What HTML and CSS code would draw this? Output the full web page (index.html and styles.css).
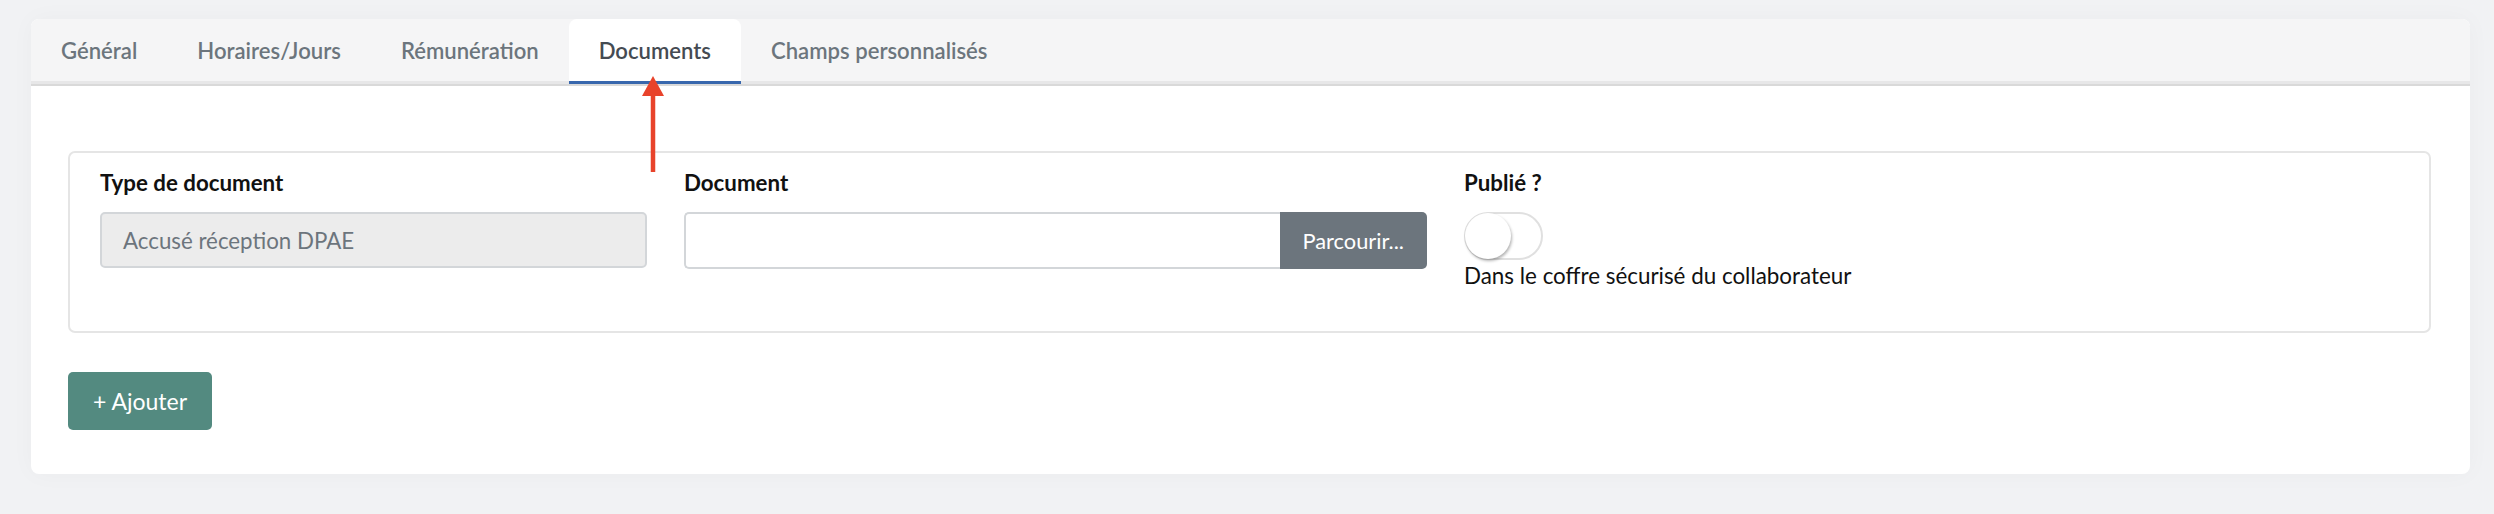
FILE: index.html
```html
<!DOCTYPE html>
<html lang="fr">
<head>
    <meta charset="UTF-8">
    <title>Collaborateur - Documents</title>
    <link rel="stylesheet" href="styles.css">
</head>
<body>
    <div class="card">
        <ul class="tabs">
            <li class="tab">Général</li>
            <li class="tab">Horaires/Jours</li>
            <li class="tab">Rémunération</li>
            <li class="tab active">Documents</li>
            <li class="tab">Champs personnalisés</li>
        </ul>

        <div class="tab-body">
            <div class="doc-row">
                <div class="field">
                    <label>Type de document</label>
                    <div class="input disabled">Accusé réception DPAE</div>
                </div>
                <div class="field">
                    <label>Document</label>
                    <div class="file-input">
                        <span class="file-name"></span>
                        <span class="file-btn">Parcourir...</span>
                    </div>
                </div>
                <div class="field">
                    <label>Publié ?</label>
                    <span class="switch"><span class="knob"></span></span>
                    <p class="hint">Dans le coffre sécurisé du collaborateur</p>
                </div>
            </div>

            <button class="btn-add">+ Ajouter</button>
        </div>

        <!-- annotation arrow pointing at the active tab -->
        <svg class="arrow" width="22" height="96" viewBox="0 0 22 96">
            <polygon points="11,0 0,20 22,20" fill="#e8432b"/>
            <rect x="8.75" y="18" width="4.5" height="78" fill="#e8432b"/>
        </svg>
    </div>
</body>
</html>
```
FILE: styles.css
```css
body {
    margin: 0;
    padding: 19px 24px 40px 31px;
    background-color: #f1f2f4;
    font-family: Lato, "Open Sans", sans-serif;
    color: #212529;
}

.card {
    position: relative;
    background-color: #fff;
    border-radius: 8px;
    box-shadow: 0 0 24px rgba(0, 0, 0, 0.03);
    padding-bottom: 44px;
}

.tabs {
    display: flex;
    margin: 0;
    padding: 0;
    list-style: none;
    height: 62px;
    background-color: #f5f5f6;
    border-radius: 8px 8px 0 0;
    border-bottom: 3px solid #e7e7e8;
    box-shadow: 0 2px 0 #d9d9d9;
}

.tab {
    display: flex;
    align-items: center;
    padding: 0 30px;
    font-size: 22.1px;
    font-weight: 600;
    color: #6c757d;
}

.tab.active {
    background-color: #fff;
    color: #454b52;
    border-radius: 8px 8px 0 0;
    border-bottom: 3px solid #3867ad;
    margin-bottom: -3px;
}

.tab-body {
    padding: 67px 39px 0 37px;
}

.doc-row {
    display: grid;
    grid-template-columns: 547px 743px 1fr;
    column-gap: 37px;
    border: 2px solid #e5e5e5;
    border-radius: 7px;
    padding: 14px 30px 40px 30px;
}

.field label {
    display: block;
    font-size: 22.3px;
    font-weight: 700;
    line-height: 31px;
    margin-bottom: 14px;
    color: #111;
}

.input {
    display: flex;
    align-items: center;
    height: 56px;
    box-sizing: border-box;
    padding: 0 21px;
    border: 2px solid #d3d6d9;
    border-radius: 5px;
    font-size: 22.3px;
    color: #6c757d;
}

.input.disabled {
    background-color: #ececec;
}

.file-input {
    display: flex;
    height: 57px;
}

.file-name {
    flex: 1;
    border: 2px solid #d3d6d9;
    border-right: none;
    border-radius: 5px 0 0 5px;
}

.file-btn {
    display: flex;
    align-items: center;
    padding: 0 23px;
    background-color: #6c757d;
    color: #fff;
    font-size: 21.8px;
    border-radius: 0 5px 5px 0;
}

.switch {
    display: block;
    position: relative;
    width: 79px;
    height: 48px;
    box-sizing: border-box;
    border: 2px solid #e0e0e0;
    border-radius: 24px;
    background-color: #fff;
}

.knob {
    position: absolute;
    left: -1px;
    top: -1px;
    width: 46px;
    height: 46px;
    border-radius: 50%;
    background-color: #fff;
    box-shadow: 1px 2px 3px rgba(0, 0, 0, 0.3);
}

.hint {
    margin: 0;
    font-size: 22.4px;
    line-height: 31px;
    color: #111;
}

.btn-add {
    margin-top: 39px;
    height: 58px;
    padding: 0 25px;
    border: none;
    border-radius: 5px;
    background-color: #538a80;
    color: #fff;
    font-family: inherit;
    font-size: 23px;
}

.arrow {
    position: absolute;
    left: 611px;
    top: 57px;
}
```
